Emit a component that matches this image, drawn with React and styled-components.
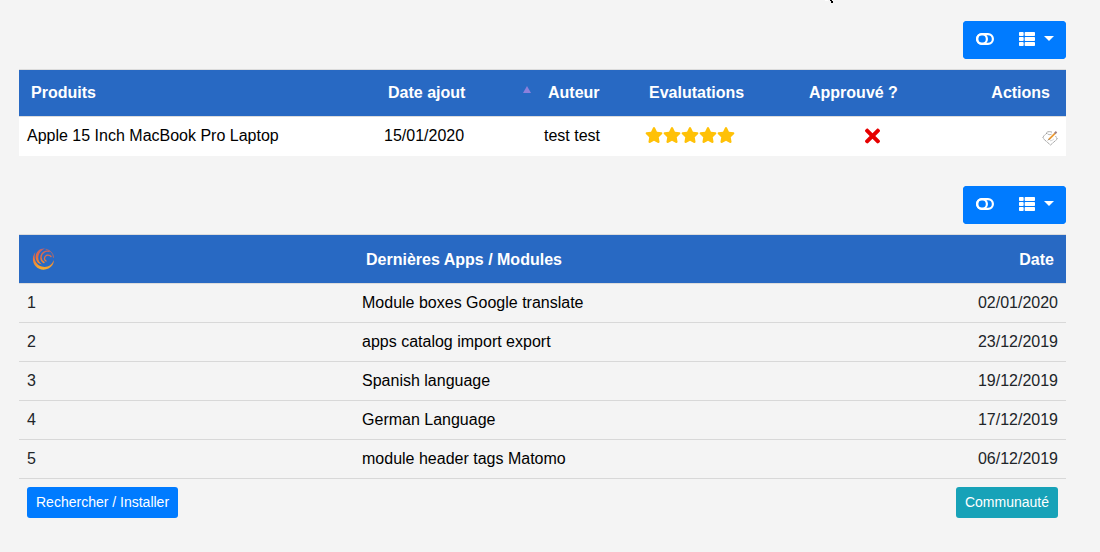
import React from "react";
import styled, { createGlobalStyle } from "styled-components";
import { FaThList, FaStar, FaTimes } from "react-icons/fa";

const GlobalStyle = createGlobalStyle`
  *, *::before, *::after { box-sizing: border-box; }
  body {
    margin: 0;
    background: #f4f4f4;
    color: #212529;
    font-family: "Liberation Sans", Arial, sans-serif;
    font-size: 16px;
    line-height: 24px;
  }
`;

const Page = styled.main`
  padding: 21px 34px 34px 19px;
`;

const Panel = styled.section`
  & + & { margin-top: 30px; }
`;

const Toolbar = styled.div`
  display: flex;
  justify-content: flex-end;
  margin-bottom: 10px;
`;

const ButtonGroup = styled.div`
  display: flex;
  overflow: hidden;
  border-radius: 4px;
  background: #007bff;
`;

const ToolButton = styled.button`
  display: flex;
  align-items: center;
  height: 38px;
  padding: 0 13px 2px;
  border: 0;
  background: #007bff;
  color: #fff;
  cursor: pointer;
  & + & { padding: 0 12px 2px; }
  svg { display: block; }
`;

const Caret = styled.span`
  margin: 0 0 2px 9px;
  border: solid transparent;
  border-width: 5px 5px 0;
  border-top-color: #fff;
`;

const Table = styled.table`
  width: 100%;
  table-layout: fixed;
  border-spacing: 0;
`;

const Col = styled.col`
  width: ${({ $width }) => $width || "auto"};
`;

const HeadCell = styled.th`
  height: ${({ $tall }) => ($tall ? 50 : 48)}px;
  padding: ${({ $tall }) => ($tall ? 2 : 0)}px ${({ $end }) => $end || "12px"} 0 12px;
  border: solid #dcdcdc;
  border-width: 1px 0;
  background: #2869c3;
  color: #fff;
  text-align: ${({ $align }) => $align || "left"};
  white-space: nowrap;
`;

const SortLabel = styled.span`
  display: flex;
  align-items: center;
  justify-content: space-between;
`;

const SortArrow = styled.span`
  border: solid transparent;
  border-width: 0 4px 7px;
  border-bottom-color: #8c80dc;
  margin-bottom: 7px;
`;

const Cell = styled.td`
  height: 39px;
  padding: 0 8px;
  color: ${({ $muted }) => ($muted ? "#212529" : "#000")};
  text-align: ${({ $align }) => $align || "left"};
  background: ${({ $white }) => ($white ? "#fff" : "transparent")};
  border-bottom: 1px solid ${({ $white }) => ($white ? "#fff" : "#d8d8d8")};
`;

const Stars = styled.div`
  display: flex;
  padding-bottom: 2px;
  color: #ffc107;
`;

const Rejected = styled(FaTimes)`
  display: block;
  width: 15px;
  height: 22px;
  margin: 0 auto;
  color: #e60000;
`;

const EditLink = styled.a`
  display: block;
  width: 16px;
  margin: 4px 0 0 auto;
  svg { display: block; }
`;

const Logo = styled.svg`
  display: block;
`;

const Footer = styled.footer`
  display: flex;
  justify-content: space-between;
  padding: 8px 8px 0;
`;

const FooterLink = styled.a`
  padding: 5px 9px;
  border-radius: 3px;
  background: ${({ $info }) => ($info ? "#17a2b8" : "#007bff")};
  color: #fff;
  font-size: 14px;
  line-height: 21px;
  text-decoration: none;
`;

const Pointer = styled.svg`
  position: absolute;
  top: 0;
  left: 75%;
`;

const modules = [
  ["Module boxes Google translate", "02/01/2020"],
  ["apps catalog import export", "23/12/2019"],
  ["Spanish language", "19/12/2019"],
  ["German Language", "17/12/2019"],
  ["module header tags Matomo", "06/12/2019"],
];

function ToggleIcon() {
  return (
    <svg width="18" height="12" viewBox="0 0 18 12" fill="none" stroke="#fff" strokeWidth="2.2" aria-hidden="true">
      <rect x="1.1" y="1.1" width="15.8" height="9.8" rx="4.9" />
      <circle cx="6" cy="6" r="4.9" />
    </svg>
  );
}

function TableTools() {
  return (
    <Toolbar>
      <ButtonGroup>
        <ToolButton type="button" aria-label="Basculer">
          <ToggleIcon />
        </ToolButton>
        <ToolButton type="button" aria-label="Colonnes">
          <FaThList size={16} />
          <Caret />
        </ToolButton>
      </ButtonGroup>
    </Toolbar>
  );
}

function EditIcon() {
  return (
    <svg width="16" height="15" viewBox="0 0 16 15" fill="none" aria-hidden="true">
      <path d="M5 2 0.700 6l1.500 2.500L8.500 14l6.800-6L13.500 5" stroke="#999" strokeDasharray="1.500 0.500" />
      <path d="M4.500 1.500c1.500-1.200 4-1 5.500-.3M5.500 2.800c1 1 2.500 1 4 .4" stroke="#aaa" />
      <path d="M8 9.800c1.500 0 3-.8 4-2" stroke="#d4d4d4" />
      <path d="m7 8.300 6-6" stroke="#eb9a34" strokeWidth="1.800" />
      <path d="m6 9.300 1.500-1.500" stroke="#8a6a48" />
      <path d="m12.800 2.500 1.700-1.700" stroke="#a08080" strokeWidth="2" />
    </svg>
  );
}

function SwirlLogo() {
  return (
    <Logo width="24" height="24" viewBox="-1 1 24 24" fill="none" strokeLinecap="round" aria-hidden="true">
      <defs>
        <linearGradient id="swirl" gradientUnits="userSpaceOnUse" x1="0" y1="1" x2="0" y2="23">
          <stop offset="0" stopColor="#c0606a" />
          <stop offset="0.45" stopColor="#ec6f3c" />
          <stop offset="1" stopColor="#f7b32b" />
        </linearGradient>
      </defs>
      <g fill="url(#swirl)">
        <path d="M3.500 5C0 9 0 15 3.500 19c5 5.500 13 4.500 17-1 1-1.500 1.300-3 1.300-5-2 5.500-7 8-12 6.500C4 18 1 11.500 3.500 5z" />
        <path d="M13 1.500C6.500 1 2.800 6.500 3.800 11.500c.7 3.500 3 5.500 6 6C7.300 15.500 6 13 6.300 10 6.600 6 9.500 3 13 1.500z" />
      </g>
      <g stroke="url(#swirl)">
        <path d="M17 4.300C13 3.500 9.500 6 9 10c-.2 2.500 1 4.500 3 5.500" strokeWidth="1.400" />
        <path d="M19 9.500c-2-2.500-6-1.500-6.500 1.500-.2 1.500.5 2.500 1.500 3" strokeWidth="1.300" />
        <path d="M14 2.300c4 .7 7.300 4 7.500 8" strokeWidth="1" opacity=".7" />
      </g>
    </Logo>
  );
}

export default function App() {
  return (
    <>
      <GlobalStyle />
      <Pointer width="10" height="4" aria-hidden="true">
        <path d="M0 0h3v1H0z" fill="#fff" />
        <path d="M5 0h2v1h1v2H6V1H5z" fill="#000" />
      </Pointer>
      <Page>
        <Panel>
          <TableTools />
          <Table>
            <colgroup>
              <Col />
              <Col $width="160px" />
              <Col $width="101px" />
              <Col $width="160px" />
              <Col $width="151px" />
              <Col $width="118px" />
            </colgroup>
            <thead>
              <tr>
                <HeadCell>Produits</HeadCell>
                <HeadCell $end="5px">
                  <SortLabel>
                    Date ajout
                    <SortArrow />
                  </SortLabel>
                </HeadCell>
                <HeadCell>Auteur</HeadCell>
                <HeadCell>Evalutations</HeadCell>
                <HeadCell>Approuvé ?</HeadCell>
                <HeadCell $align="right" $end="16px">Actions</HeadCell>
              </tr>
            </thead>
            <tbody>
              <tr>
                <Cell $white>Apple 15 Inch MacBook Pro Laptop</Cell>
                <Cell $white>15/01/2020</Cell>
                <Cell $white>test test</Cell>
                <Cell $white>
                  <Stars role="img" aria-label="5 / 5">
                    {[1, 2, 3, 4, 5].map((n) => (
                      <FaStar key={n} size={18} />
                    ))}
                  </Stars>
                </Cell>
                <Cell $white><Rejected /></Cell>
                <Cell $white>
                  <EditLink href="#edit" aria-label="Editer"><EditIcon /></EditLink>
                </Cell>
              </tr>
            </tbody>
          </Table>
        </Panel>
        <Panel>
          <TableTools />
          <Table>
            <colgroup>
              <Col $width="32%" />
              <Col />
              <Col $width="160px" />
            </colgroup>
            <thead>
              <tr>
                <HeadCell $tall><SwirlLogo /></HeadCell>
                <HeadCell $tall>Dernières Apps / Modules</HeadCell>
                <HeadCell $tall $align="right">Date</HeadCell>
              </tr>
            </thead>
            <tbody>
              {modules.map(([name, date], i) => (
                <tr key={name}>
                  <Cell $muted>{i + 1}</Cell>
                  <Cell>{name}</Cell>
                  <Cell $muted $align="right">{date}</Cell>
                </tr>
              ))}
            </tbody>
          </Table>
          <Footer>
            <FooterLink href="#installer">Rechercher / Installer</FooterLink>
            <FooterLink href="#communaute" $info>Communauté</FooterLink>
          </Footer>
        </Panel>
      </Page>
    </>
  );
}
